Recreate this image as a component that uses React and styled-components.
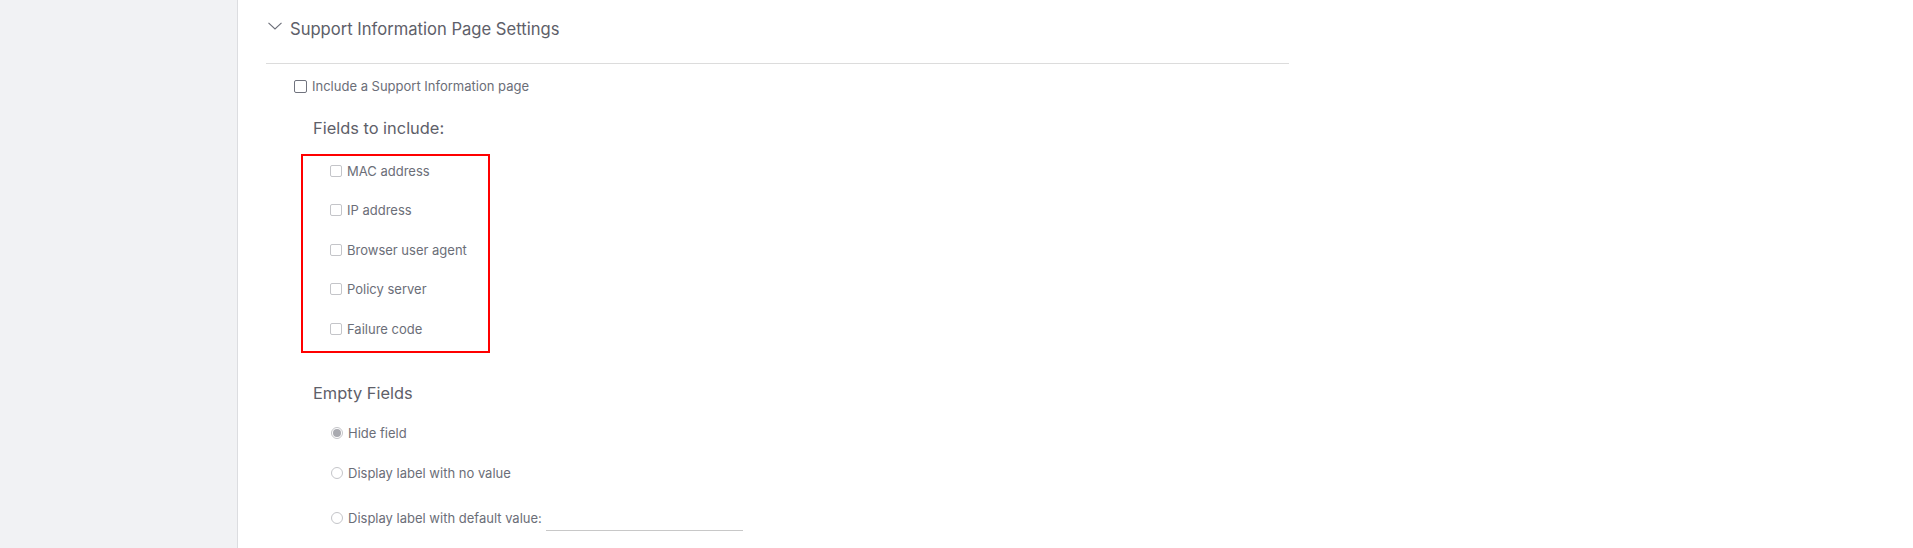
import React, { useState } from "react";
import styled, { createGlobalStyle } from "styled-components";

const GlobalStyle = createGlobalStyle`
  html, body {
    margin: 0;
    padding: 0;
    background: #ffffff;
  }
  body {
    font-family: Inter, "Liberation Sans", Arial, sans-serif;
    color: #6b6e78;
  }
`;

const FIELDS = [
  "MAC address",
  "IP address",
  "Browser user agent",
  "Policy server",
  "Failure code",
];

const EMPTY_OPTIONS = [
  { id: "hide", label: "Hide field" },
  { id: "novalue", label: "Display label with no value" },
  { id: "default", label: "Display label with default value:", input: true },
];

const App = () => {
  const [includePage, setIncludePage] = useState(false);
  const [fields, setFields] = useState({});
  const [emptyMode, setEmptyMode] = useState("hide");

  const toggleField = (name) => {
    setFields({ ...fields, [name]: !fields[name] });
  };

  return (
    <>
      <GlobalStyle />
      <Page>
        <Sidebar />
        <Main>
          <Section>
            <Header>
              <Chevron width="14" height="8" viewBox="0 0 14 8">
                <polyline
                  points="0.5,0.8 7,7 13.5,0.8"
                  fill="none"
                  stroke="#6b6e78"
                  strokeWidth="1.1"
                />
              </Chevron>
              <Title>Support Information Page Settings</Title>
            </Header>

            <IncludeRow onClick={() => setIncludePage(!includePage)}>
              <Box $dark checked={includePage} />
              <Label>Include a Support Information page</Label>
            </IncludeRow>

            <Heading>Fields to include:</Heading>
            <FieldBox>
              {FIELDS.map((name) => (
                <OptionRow key={name} onClick={() => toggleField(name)}>
                  <Box checked={!!fields[name]} />
                  <Label>{name}</Label>
                </OptionRow>
              ))}
            </FieldBox>

            <Heading $top="20px">Empty Fields</Heading>
            <RadioList>
              {EMPTY_OPTIONS.map((opt) => (
                <RadioRow
                  key={opt.id}
                  $tall={opt.input}
                  onClick={() => setEmptyMode(opt.id)}
                >
                  <Radio checked={emptyMode === opt.id} />
                  <Label>{opt.label}</Label>
                  {opt.input ? <DefaultInput type="text" /> : null}
                </RadioRow>
              ))}
            </RadioList>
          </Section>
        </Main>
      </Page>
    </>
  );
};

const Page = styled.div`
  display: flex;
  width: 100%;
  height: 100vh;
  overflow: hidden;
`;

const Sidebar = styled.div`
  flex: 0 0 237px;
  background-color: #f1f2f4;
  border-right: 1px solid #dcdde0;
`;

const Main = styled.div`
  flex: 1;
  padding-left: 28px;
`;

const Section = styled.div`
  width: 1023px;
`;

const Header = styled.div`
  display: flex;
  align-items: center;
  height: 57px;
  padding-bottom: 6px;
  border-bottom: 1px solid #dcdcdc;
`;

const Chevron = styled.svg`
  margin-left: 2px;
  margin-right: 8px;
  margin-top: -6px;
`;

const Title = styled.div`
  font-size: 16.6px;
  color: #5e6069;
`;

const IncludeRow = styled.div`
  display: flex;
  align-items: center;
  height: 44px;
  padding-left: 28px;
  cursor: pointer;
`;

const Box = styled.span`
  box-sizing: border-box;
  display: inline-block;
  width: ${(p) => (p.$dark ? "13px" : "12px")};
  height: ${(p) => (p.$dark ? "13px" : "12px")};
  border: 1px solid ${(p) => (p.$dark ? "#70737e" : "#c4c5c9")};
  border-radius: 2px;
  background: ${(p) => (p.checked ? "#6b6e78" : "#fff")};
  margin-right: 5px;
  flex-shrink: 0;
`;

const Label = styled.span`
  font-size: 13px;
  color: #6b6e78;
  white-space: nowrap;
`;

const Heading = styled.div`
  display: flex;
  align-items: center;
  height: 40px;
  margin-top: ${(p) => p.$top || "0"};
  padding-left: 47px;
  font-size: 16.4px;
  color: #5e6069;
`;

const FieldBox = styled.div`
  box-sizing: border-box;
  display: flex;
  flex-direction: column;
  gap: 10.5px;
  width: 189px;
  height: 199px;
  margin: 6px 0 0 35px;
  padding: 0 0 8px 27px;
  border: 2px solid #ff0000;
`;

const OptionRow = styled.div`
  display: flex;
  align-items: center;
  height: 29px;
  cursor: pointer;
`;

const RadioList = styled.div`
  display: flex;
  flex-direction: column;
  gap: 10px;
  margin-top: 5px;
  padding-left: 65px;
`;

const RadioRow = styled.div`
  display: flex;
  align-items: center;
  height: 30px;
  margin-top: ${(p) => (p.$tall ? "5px" : "0")};
  cursor: pointer;
`;

const Radio = styled.span`
  box-sizing: border-box;
  position: relative;
  display: inline-block;
  width: 12px;
  height: 12px;
  margin-right: 5px;
  border: 1px solid #c4c5c9;
  border-radius: 50%;
  background: #fff;
  flex-shrink: 0;

  &::after {
    content: "";
    position: absolute;
    top: 1px;
    left: 1px;
    width: 8px;
    height: 8px;
    border-radius: 50%;
    background: #a9aab0;
    display: ${(p) => (p.checked ? "block" : "none")};
  }
`;

const DefaultInput = styled.input`
  box-sizing: border-box;
  width: 197px;
  height: 26px;
  margin-left: 4px;
  padding: 0 4px;
  border: none;
  border-bottom: 1px solid #c8c8c8;
  outline: none;
  font-family: inherit;
  font-size: 13px;
  color: #5e6069;
  background: transparent;
`;

export default App;
